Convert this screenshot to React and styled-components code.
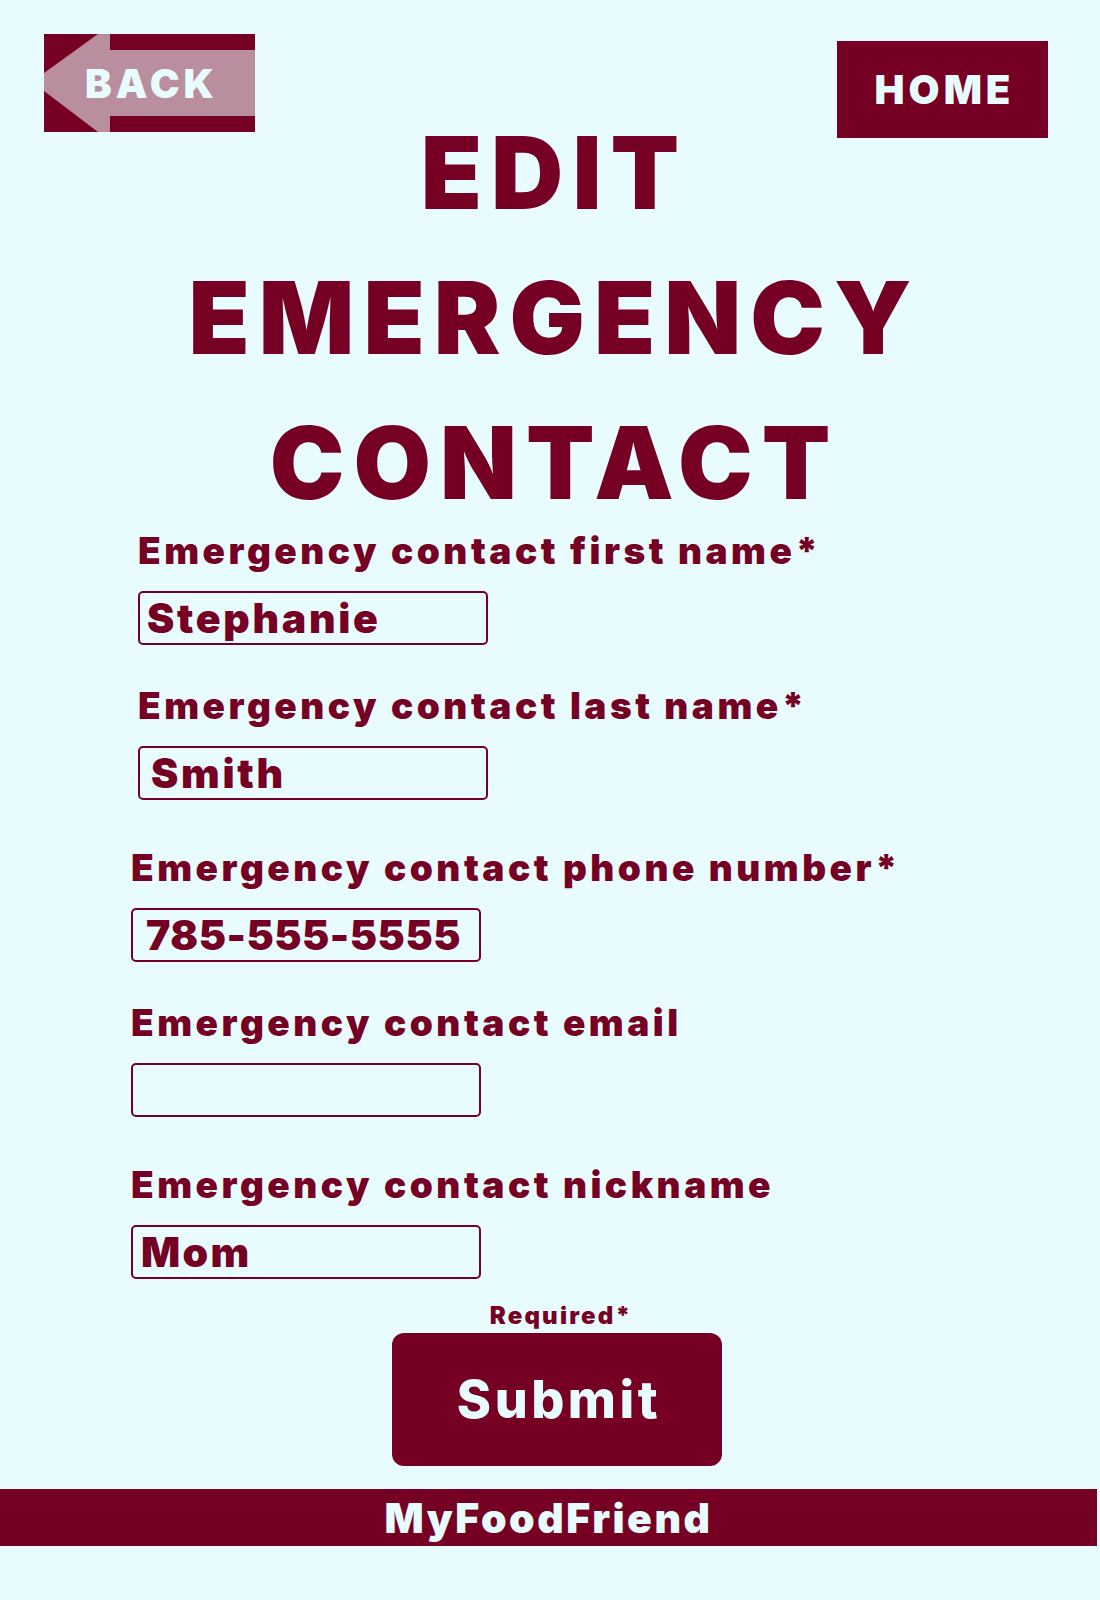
import styled, { createGlobalStyle } from "styled-components";

const MAROON = "#750024";
const SKY = "#e8fbfe";
const ROSE = "#b98e9e";

const GlobalStyle = createGlobalStyle`
  html, body {
    margin: 0;
    padding: 0;
    background: ${SKY};
  }
  body {
    font-family: Inter, "Liberation Sans", sans-serif;
  }
`;

const Page = styled.div`
  width: 1100px;
  min-height: 1600px;
  background: ${SKY};
  color: ${MAROON};
  display: flex;
  flex-direction: column;
`;

const Header = styled.header`
  height: 100px;
  box-sizing: border-box;
  padding: 34px 52px 0 44px;
  display: flex;
  justify-content: space-between;
  align-items: flex-start;
`;

const BackButton = styled.button`
  position: relative;
  width: 211px;
  height: 98px;
  padding: 0 0 0 4px;
  border: 0;
  background: ${MAROON};
  cursor: pointer;
  display: flex;
  align-items: center;
  justify-content: center;

  svg {
    position: absolute;
    inset: 0;
  }
`;

const ButtonText = styled.span`
  position: relative;
  font-family: Inter, "Liberation Sans", sans-serif;
  font-weight: 900;
  font-size: 40px;
  letter-spacing: 4px;
  color: ${SKY};
`;

const HomeButton = styled.button`
  margin-top: 7px;
  width: 211px;
  height: 97px;
  padding: 0 0 0 4px;
  border: 0;
  background: ${MAROON};
  cursor: pointer;
  display: flex;
  align-items: center;
  justify-content: center;
`;

const Title = styled.h1`
  margin: 0 0 -8px;
  padding-left: 9px;
  text-align: center;
  font-weight: 900;
  font-size: 100px;
  line-height: 145px;
  letter-spacing: 9px;
`;

const Form = styled.form`
  display: flex;
  flex-direction: column;
`;

const Field = styled.div`
  margin-top: ${(p) => p.$top}px;
  padding-left: ${(p) => p.$indent}px;
  display: flex;
  flex-direction: column;
  align-items: flex-start;
`;

const Label = styled.label`
  margin-top: 3px;
  font-weight: 900;
  font-size: 37px;
  line-height: 44px;
  letter-spacing: 3.5px;
`;

const TextBox = styled.input`
  margin-top: 18px;
  width: 350px;
  height: 54px;
  box-sizing: border-box;
  border: 2px solid ${MAROON};
  border-radius: 5px;
  background: ${SKY};
  padding: 0 0 0 ${(p) => p.$pad}px;
  font-family: Inter, "Liberation Sans", sans-serif;
  font-weight: 900;
  font-size: 41px;
  letter-spacing: ${(p) => p.$spacing}px;
  color: ${MAROON};
  outline: none;
`;

const SubmitArea = styled.div`
  margin-top: 22px;
  padding-left: 14px;
  display: flex;
  flex-direction: column;
  align-items: center;
`;

const Required = styled.div`
  margin-top: 1px;
  margin-left: 8px;
  font-weight: 900;
  font-size: 24px;
  line-height: 28px;
  letter-spacing: 2.2px;
`;

const SubmitButton = styled.button`
  margin-top: 3px;
  width: 330px;
  height: 133px;
  padding: 0 0 0 4px;
  border: 0;
  border-radius: 12px;
  background: ${MAROON};
  color: ${SKY};
  font-family: Inter, "Liberation Sans", sans-serif;
  font-weight: 800;
  font-size: 52px;
  letter-spacing: 3.5px;
  cursor: pointer;
`;

const Footer = styled.footer`
  margin-top: 23px;
  width: 1097px;
  height: 57px;
  background: ${MAROON};
  color: ${SKY};
  display: flex;
  align-items: center;
  justify-content: center;
  font-weight: 900;
  font-size: 41px;
  letter-spacing: 2.5px;
`;

const fields = [
  { label: "Emergency contact first name*", value: "Stephanie", indent: 138, top: -1, pad: 7, spacing: 2.7 },
  { label: "Emergency contact last name*", value: "Smith", indent: 138, top: 36, pad: 11, spacing: 2.7 },
  { label: "Emergency contact phone number*", value: "785-555-5555", indent: 131, top: 43, pad: 13, spacing: 0.5 },
  { label: "Emergency contact email", value: "", indent: 131, top: 36, pad: 10, spacing: 2 },
  { label: "Emergency contact nickname", value: "Mom", indent: 131, top: 43, pad: 8, spacing: 2.3 },
];

function BackArrow() {
  return (
    <svg width="211" height="98" viewBox="0 0 211 98">
      <polygon
        points="0,39 54,0 66,0 66,16 211,16 211,82 66,82 66,98 54,98 0,57"
        fill={ROSE}
      />
    </svg>
  );
}

export default function App() {
  return (
    <>
      <GlobalStyle />
      <Page>
        <Header>
          <BackButton type="button">
            <BackArrow />
            <ButtonText>BACK</ButtonText>
          </BackButton>
          <HomeButton type="button">
            <ButtonText>HOME</ButtonText>
          </HomeButton>
        </Header>

        <Title>
          EDIT
          <br />
          EMERGENCY
          <br />
          CONTACT
        </Title>

        <Form onSubmit={(e) => e.preventDefault()}>
          {fields.map((f, i) => (
            <Field key={f.label} $indent={f.indent} $top={f.top}>
              <Label htmlFor={`field-${i}`}>{f.label}</Label>
              <TextBox
                id={`field-${i}`}
                defaultValue={f.value}
                $pad={f.pad}
                $spacing={f.spacing}
              />
            </Field>
          ))}
          <SubmitArea>
            <Required>Required*</Required>
            <SubmitButton type="submit">Submit</SubmitButton>
          </SubmitArea>
        </Form>

        <Footer>MyFoodFriend</Footer>
      </Page>
    </>
  );
}
